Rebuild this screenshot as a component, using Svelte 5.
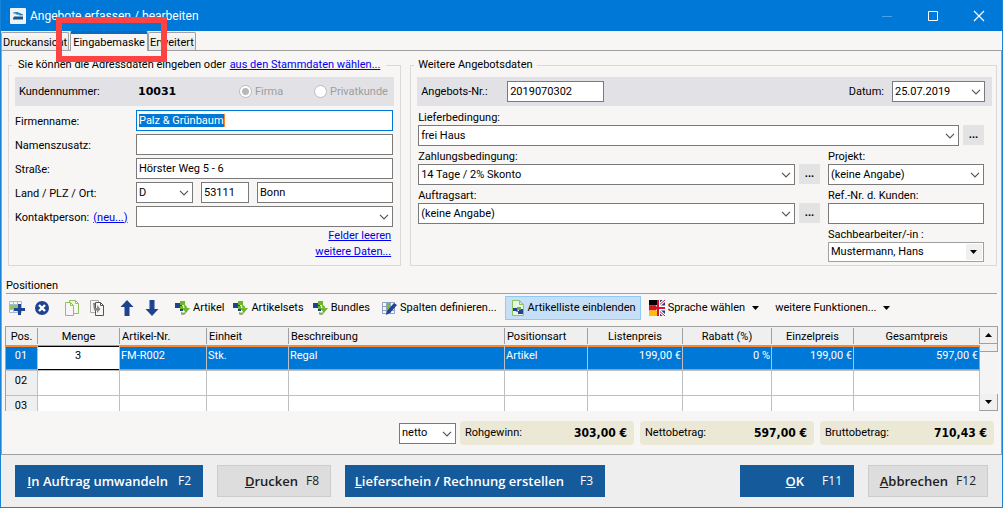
<script>
import { onMount } from 'svelte';

const tabs = ['Druckansicht', 'Eingabemaske', 'Erweitert'];
let activeTab = $state('Eingabemaske');
let kundenart = $state('firma');
let showList = $state(true);
let nameInput;

let firma = $state('Palz & Grünbaum');
let zusatz = $state('');
let strasse = $state('Hörster Weg 5 - 6');
let plz = $state('53111');
let ort = $state('Bonn');

const columns = [
  { title: 'Pos.', cls: 'pos' },
  { title: 'Menge', cls: 'menge' },
  { title: 'Artikel-Nr.', cls: 'nr' },
  { title: 'Einheit', cls: 'einheit' },
  { title: 'Beschreibung', cls: 'beschreibung' },
  { title: 'Positionsart', cls: 'art' },
  { title: 'Listenpreis', cls: 'liste' },
  { title: 'Rabatt (%)', cls: 'rabatt' },
  { title: 'Einzelpreis', cls: 'einzel' },
  { title: 'Gesamtpreis', cls: 'gesamt' }
];

const rows = [
  ['01', '3', 'FM-R002', 'Stk.', 'Regal', 'Artikel', '199,00 €', '0 %', '199,00 €', '597,00 €'],
  ['02', '', '', '', '', '', '', '', '', ''],
  ['03', '', '', '', '', '', '', '', '', '']
];

const sums = [
  { label: 'Rohgewinn:', value: '303,00 €' },
  { label: 'Nettobetrag:', value: '597,00 €' },
  { label: 'Bruttobetrag:', value: '710,43 €' }
];

onMount(() => {
  nameInput.focus();
  nameInput.select();
});
</script>

{#snippet combo(id, value, cls)}
  <span class="combo {cls}">
    <select {id} aria-label={id}>
      <option>{value}</option>
    </select>
    {#if cls === 'old'}
      <svg class="old-arrow" width="16" height="16" viewBox="0 0 16 16">
        <rect width="16" height="16" fill="#f0f0f0" />
        <path d="M4 6h7l-3.5 4z" fill="#000" />
      </svg>
    {:else}
      <svg class="chevron" width="10" height="6" viewBox="0 0 10 6" fill="none" stroke="#555" stroke-width="1.2">
        <path d="M1 .8l4 4 4-4" />
      </svg>
    {/if}
  </span>
{/snippet}

{#snippet insertIcon()}
  <svg width="16" height="16" viewBox="0 0 16 16">
    <path d="M1 3h7v5H1z" fill="#1f4391" />
    <path d="M6 1h5v4H6z" fill="#6cb52d" />
    <path d="M6 6h3v3H6z" fill="#6cb52d" />
    <path d="M6 9h3v2H6z" fill="#1f4391" />
    <path d="M10 5c2 0 3 1 3 3h3l-4 5-4-5h2.500c0-1 0-1-1-1.500z" fill="#6cb52d" />
    <path d="M7 12c2 1 3 1 4 0l1 1c-1 2-3 2.500-5 1.500z" fill="#8ea46d" />
  </svg>
{/snippet}

<div class="window">
  <header class="titlebar">
    <svg width="16" height="16" viewBox="0 0 16 16">
      <rect width="16" height="16" rx="1" fill="#eef3f7" />
      <path d="M3 4.500l4-.5 6 2.500v1L7 6.500z" fill="#1d6fae" />
      <path d="M3 10.500L4 8.500h9v3H3z" fill="#1a5485" />
      <path d="M3 5l8 2.500" stroke="#67b7e8" />
    </svg>
    <h1>Angebote erfassen / bearbeiten</h1>
    <button class="win" aria-label="Minimieren">
      <svg width="12" height="12" viewBox="0 0 12 12" stroke="#4ba0e4"><path d="M1 6.500h10" /></svg>
    </button>
    <button class="win" aria-label="Maximieren">
      <svg width="12" height="12" viewBox="0 0 12 12" fill="none" stroke="#fff"><path d="M1.500 1.500h9v9h-9z" /></svg>
    </button>
    <button class="win" aria-label="Schließen">
      <svg width="12" height="12" viewBox="0 0 12 12" stroke="#fff" stroke-width="1.200"><path d="M1 1l10 10M11 1L1 11" /></svg>
    </button>
  </header>

  <div class="tabs" role="tablist">
    {#each tabs as tab}
      <button
        class="tab"
        class:active={activeTab === tab}
        role="tab"
        aria-selected={activeTab === tab}
        onclick={() => (activeTab = tab)}>{tab}</button>
    {/each}
    <span class="marker"></span>
  </div>

  <main class="pane">
    <div class="groups">
      <fieldset class="address">
        <legend>Sie können die Adressdaten eingeben oder <a href="#stammdaten">aus den Stammdaten wählen...</a></legend>
        <div class="band">
          <span class="band-label">Kundennummer:</span>
          <strong>10031</strong>
          <label class="radio"><input type="radio" name="art" value="firma" bind:group={kundenart} disabled />Firma</label>
          <label class="radio"><input type="radio" name="art" value="privat" bind:group={kundenart} disabled />Privatkunde</label>
        </div>
        <div class="form">
          <label for="firma">Firmenname:</label>
          <span class="focus-field">
            <input id="firma" bind:value={firma} bind:this={nameInput} />
            <i class="caret"></i>
          </span>
          <label for="zusatz">Namenszusatz:</label>
          <input id="zusatz" bind:value={zusatz} />
          <label for="strasse">Straße:</label>
          <input id="strasse" bind:value={strasse} />
          <label for="land">Land / PLZ / Ort:</label>
          <div class="place">
            {@render combo('land', 'D', '')}
            <input class="plz" aria-label="PLZ" bind:value={plz} />
            <input aria-label="Ort" bind:value={ort} />
          </div>
          <span class="contact"><label for="kontakt">Kontaktperson:</label><a href="#neu">(neu...)</a></span>
          {@render combo('kontakt', '', '')}
        </div>
        <div class="links">
          <a href="#leeren">Felder leeren</a>
          <a href="#daten">weitere Daten...</a>
        </div>
      </fieldset>

      <fieldset class="offer">
        <legend>Weitere Angebotsdaten</legend>
        <div class="band">
          <label class="band-label" for="angebot">Angebots-Nr.:</label>
          <input id="angebot" class="number" value="2019070302" />
          <label class="date-label" for="datum">Datum:</label>
          {@render combo('datum', '25.07.2019', 'date')}
        </div>
        <div class="details">
          <div class="field wide">
            <label for="liefer">Lieferbedingung:</label>
            <div class="pick">
              {@render combo('liefer', 'frei Haus', '')}
              <button class="more" aria-label="Lieferbedingung bearbeiten">...</button>
            </div>
          </div>
          <div class="field">
            <label for="zahlung">Zahlungsbedingung:</label>
            <div class="pick">
              {@render combo('zahlung', '14 Tage / 2% Skonto', '')}
              <button class="more" aria-label="Zahlungsbedingung bearbeiten">...</button>
            </div>
          </div>
          <div class="field">
            <label for="projekt">Projekt:</label>
            {@render combo('projekt', '(keine Angabe)', '')}
          </div>
          <div class="field">
            <label for="auftrag">Auftragsart:</label>
            <div class="pick">
              {@render combo('auftrag', '(keine Angabe)', '')}
              <button class="more" aria-label="Auftragsart bearbeiten">...</button>
            </div>
          </div>
          <div class="field">
            <label for="ref">Ref.-Nr. d. Kunden:</label>
            <input id="ref" />
          </div>
          <div class="field last">
            <label for="bearbeiter">Sachbearbeiter/-in :</label>
            {@render combo('bearbeiter', 'Mustermann, Hans', 'old')}
          </div>
        </div>
      </fieldset>
    </div>

    <h2>Positionen</h2>
    <div class="toolbar">
      <button class="tool icon" aria-label="Position einfügen">
        <svg width="16" height="16" viewBox="0 0 16 16">
          <path d="M.5 1.500h12v11H.5zM.5 4.500h12M.5 9.500h12M4.500 1v12M8.500 1v12" fill="none" stroke="#a9b8d4" />
          <path d="M1 5h11v4H1z" fill="#8fc466" />
          <path d="M9 4h3v4h4v3h-4v4H9v-4H5V8h4z" fill="#1f4391" />
        </svg>
      </button>
      <button class="tool icon" aria-label="Position löschen">
        <svg width="16" height="16" viewBox="0 0 16 16">
          <circle cx="8" cy="8" r="7" fill="#1f4391" />
          <path d="M5 5l6 6M11 5l-6 6" stroke="#fff" stroke-width="2.400" />
        </svg>
      </button>
      <button class="tool icon copy" aria-label="Kopieren">
        <svg width="16" height="16" viewBox="0 0 16 16" fill="#f7f6f4" stroke="#8cc45c">
          <path d="M5.500.500h6l3 3v10h-9zM11.500.500v3h3" />
          <path d="M1.500 2.500h5l3 3v10h-8zM6.500 2.500v3h3" />
        </svg>
      </button>
      <button class="tool icon" aria-label="Einfügen">
        <svg width="16" height="16" viewBox="0 0 16 16" fill="#f7f6f4">
          <path d="M1.500.5h8v12h-8z" stroke="#aaa" />
          <path d="M6.500 2.500h5l3 3v10h-8zM11.500 2.500v3h3" stroke="#555" />
          <path d="M4 3h2v5h2V5l3.500 4L8 13v-2.500H5z" fill="#888" />
        </svg>
      </button>
      <button class="tool icon up" aria-label="Nach oben">
        <svg width="16" height="16" viewBox="0 0 16 16" fill="#1f4391"><path d="M8 0l6.500 7h-4v9h-5V7h-4z" /></svg>
      </button>
      <button class="tool icon" aria-label="Nach unten">
        <svg width="16" height="16" viewBox="0 0 16 16" fill="#1f4391"><path d="M8 16l6.500-7h-4V0h-5v9h-4z" /></svg>
      </button>
      <button class="tool articles">{@render insertIcon()}Artikel</button>
      <button class="tool">{@render insertIcon()}Artikelsets</button>
      <button class="tool">{@render insertIcon()}Bundles</button>
      <button class="tool columns">
        <svg width="16" height="16" viewBox="0 0 16 16">
          <path d="M1.500 2.500h12v11h-12zM1 6.500h12M1 10.500h12M5.500 2v12M9.500 2v12" fill="none" stroke="#8fa3c8" />
          <path d="M6 3h3v10H6z" fill="#79b84a" />
          <path d="M13 3l3 2-7 8-4 2 1-4z" fill="#1f4391" />
        </svg>Spalten definieren...
      </button>
      <button class="tool toggle" class:on={showList} aria-pressed={showList} onclick={() => (showList = !showList)}>
        <svg width="14" height="16" viewBox="0 0 14 16">
          <path d="M1.500.5h7l4 4v11h-11zM8.500.5v4h4" fill="#eaf4e2" stroke="#8cc45c" />
          <path d="M2 8h5v3H2zM8 9h4v5H8zM7 11h2v3H7z" fill="#1f4391" />
          <path d="M6 7h4v3H7v2H5v-1h1z" fill="#6cb52d" />
        </svg>Artikelliste einblenden
      </button>
      <button class="tool lang">
        <svg width="16" height="16" viewBox="0 0 16 16">
          <path d="M0 0h8v5.500H0z" fill="#000" />
          <path d="M0 5.500h8v5H0z" fill="#d6141c" />
          <path d="M0 10.500h8V16H0z" fill="#ffbe0a" />
          <path d="M8 0h8v16H8z" fill="#243a86" />
          <path d="M8 7l8-7M8 9l8 7" stroke="#fff" stroke-width="3" />
          <path d="M8 7l8-7M8 9l8 7" stroke="#cf142b" />
          <path d="M8 5.500h8v5H8zM8 0h3v16H8z" fill="#fff" />
          <path d="M8 7h8v2H8zM8 0h2v16H8z" fill="#cf142b" />
        </svg>Sprache wählen
        <svg class="drop" width="7" height="4" viewBox="0 0 7 4"><path d="M0 0h7L3.500 4z" /></svg>
      </button>
      <button class="tool extra">weitere Funktionen...
        <svg class="drop" width="7" height="4" viewBox="0 0 7 4"><path d="M0 0h7L3.500 4z" /></svg>
      </button>
    </div>

    <div class="grid">
      <div class="grid-body">
        <table>
          <thead>
            <tr>
              {#each columns as col}
                <th class={col.cls}><span>{col.title}</span></th>
              {/each}
            </tr>
          </thead>
          <tbody>
            {#each rows as row, i}
              <tr class:selected={i === 0}>
                {#each row as cell, c}
                  <td class={columns[c].cls}>{cell}</td>
                {/each}
              </tr>
            {/each}
          </tbody>
        </table>
      </div>
      <div class="scroll">
        <button aria-label="Hoch"><svg width="7" height="4" viewBox="0 0 7 4"><path d="M0 4h7L3.500 0z" /></svg></button>
        <span class="thumb"></span>
        <button class="down" aria-label="Runter"><svg width="7" height="4" viewBox="0 0 7 4"><path d="M0 0h7L3.500 4z" /></svg></button>
      </div>
    </div>

    <div class="sums">
      {@render combo('preisart', 'netto', '')}
      {#each sums as sum}
        <div class="sum"><span>{sum.label}</span><b>{sum.value}</b></div>
      {/each}
    </div>
  </main>

  <footer>
    <button class="action primary convert"><span><u>I</u>n Auftrag umwandeln</span><kbd>F2</kbd></button>
    <button class="action print"><span><u>D</u>rucken</span><kbd>F8</kbd></button>
    <button class="action primary deliver"><span><u>L</u>ieferschein / Rechnung erstellen</span><kbd>F3</kbd></button>
    <button class="action primary ok"><span><u>O</u>K</span><kbd>F11</kbd></button>
    <button class="action cancel"><span><u>A</u>bbrechen</span><kbd>F12</kbd></button>
  </footer>
</div>

<style>
:global(body) {
  margin: 0;
  background: #f7f6f4;
}
.window {
  box-sizing: border-box;
  border: 1px solid #1883d7;
  border-top: none;
  background: #f7f6f4;
  color: #000;
  font: 11px/14px Roboto, "DejaVu Sans Condensed", sans-serif;
}
.window :global(*) {
  box-sizing: border-box;
}
button, input, select {
  margin: 0;
  font: inherit;
  color: inherit;
  border-radius: 0;
}
button {
  padding: 0;
  border: none;
  background: none;
  white-space: nowrap;
}
svg {
  display: block;
  flex: none;
}
a {
  color: #0000ee;
}

.titlebar {
  display: flex;
  align-items: center;
  height: 31px;
  padding-left: 9px;
  background: #0078d7;
  color: #fff;
}
h1 {
  flex: 1;
  margin: 0 0 0 4px;
  font: 12px/16px Roboto, sans-serif;
}
.win {
  display: flex;
  align-items: center;
  justify-content: center;
  width: 46px;
  height: 31px;
}

.tabs {
  position: relative;
  display: flex;
  align-items: flex-end;
  height: 19px;
}
.tab {
  height: 18px;
  padding: 3px 1px 0;
  border: 1px solid #a0a0a0;
  border-bottom: none;
  border-radius: 2px 2px 0 0;
  background: linear-gradient(#f7f6f4, #e8e8e8);
}
.tab.active {
  height: 20px;
  margin: 0 0 -1px 1px;
  padding: 1px 2px 0;
  border-top: 3px solid #0a6cc0;
  background: #f7f6f4;
  z-index: 1;
}
.marker {
  position: absolute;
  z-index: 2;
  left: 55px;
  top: -14px;
  width: 111px;
  height: 45px;
  border: 6px solid #ff4343;
  pointer-events: none;
}

.pane {
  padding: 7px 3px 9px;
  border: 1px solid #a0a0a0;
}
.groups {
  display: grid;
  grid-template-columns: 67fr 100fr;
  gap: 9px;
  padding: 0 1px 0 3px;
}
fieldset {
  margin: 0;
  padding: 5px 6px 3px;
  border: 1px solid #d9d9d9;
  min-width: 0;
}
.offer {
  padding-right: 4px;
}
legend {
  margin-left: -3px;
  padding: 0 6px;
  white-space: nowrap;
}
.offer legend {
  padding: 0 4px;
}
legend a {
  margin-left: 1px;
}
.band {
  display: flex;
  align-items: center;
  height: 29px;
  margin-bottom: 4px;
  background: #e2e2e6;
}
.band-label {
  margin-left: 4px;
}
.address .band-label {
  width: 119px;
}
strong {
  width: 101px;
  font-family: "DejaVu Sans", sans-serif;
}
.radio {
  display: flex;
  align-items: center;
  width: 75px;
  color: #9d9d9d;
  white-space: nowrap;
}
.radio input {
  appearance: none;
  flex: none;
  width: 13px;
  height: 13px;
  margin-right: 3px;
  padding: 0;
  border: 1px solid #bcbcbc;
  border-radius: 50%;
  background: #fff;
}
.radio input:checked {
  background: radial-gradient(circle, #b8b8b8 3px, #fff 4px);
}

input, select {
  width: 100%;
  height: 21px;
  padding: 1px 2px;
  border: 1px solid #7a7a7a;
  background: #fff;
  outline: none;
}
select {
  appearance: none;
  padding-right: 16px;
}
.combo {
  position: relative;
  display: block;
  flex: 1;
}
.chevron {
  position: absolute;
  right: 4px;
  top: 8px;
  pointer-events: none;
}
.old select {
  height: 20px;
  border-color: #a0a0a0;
}
.old-arrow {
  position: absolute;
  right: 2px;
  top: 2px;
  pointer-events: none;
}
.form {
  display: grid;
  grid-template-columns: 121px 1fr;
  grid-auto-rows: 21px;
  row-gap: 3px;
  align-items: center;
  margin-right: 1px;
  white-space: nowrap;
}
.form > label, .contact {
  padding-top: 2px;
}
.focus-field {
  position: relative;
}
#firma {
  display: block;
}
#firma:focus {
  border-color: #0078d7;
}
#firma::selection {
  background: #0078d7;
  color: #fff;
}
.caret {
  position: absolute;
  left: 88px;
  top: 4px;
  width: 1px;
  height: 13px;
  background: #ff8728;
}
.place {
  display: flex;
  gap: 8px;
}
.place .combo {
  flex: none;
  width: 57px;
}
.place .plz {
  flex: none;
  width: 48px;
}
.contact {
  display: flex;
  gap: 4px;
}
.links {
  display: flex;
  flex-direction: column;
  align-items: flex-end;
  padding: 1px 3px 0 0;
  line-height: 16px;
}

.number {
  width: 97px;
  margin-left: 16px;
}
.date-label {
  margin: 0 8px 0 auto;
}
.date {
  flex: none;
  width: 93px;
  margin-right: 7px;
}
.offer .band-label {
  width: 70px;
}
.details {
  display: grid;
  grid-template-columns: 1fr 156px;
  gap: 3px 8px;
  margin: 0 8px 0 1px;
}
.field {
  display: flex;
  flex-direction: column;
}
.field label {
  padding-top: 1px;
}
.field .combo {
  flex: auto;
}
.wide {
  grid-column: 1 / 3;
}
.last {
  grid-column: 2;
}
.pick {
  display: flex;
  gap: 4px;
}
.more {
  width: 21px;
  height: 20px;
  background: #e3e3e3;
  font-weight: bold;
}

h2 {
  margin: 12px 1px 0;
  border-bottom: 1px solid #a0a0a0;
  padding-top: 1px;
  font: inherit;
}
.toolbar {
  display: flex;
  align-items: center;
  height: 32px;
  padding: 2px 0 6px 4px;
}
.tool {
  display: flex;
  align-items: center;
  gap: 3px;
  height: 24px;
  margin-right: 8px;
  line-height: 16px;
}
.tool.icon {
  margin-right: 9px;
}
.tool.copy, .tool.up {
  margin-left: 5px;
}
.tool.articles {
  margin-left: 5px;
}
.tool.columns {
  margin-left: 3px;
}
.toggle {
  padding: 0 4px 0 5px;
  border: 1px solid transparent;
}
.toggle.on {
  border-color: #90c8f6;
  background: #c5dff6;
}
.drop {
  margin-left: 4px;
}
.lang {
  margin-right: 16px;
}

.grid {
  display: flex;
  height: 85px;
  border-top: 1px solid #a0a0a0;
  border-left: 1px solid #a0a0a0;
}
.grid-body {
  flex: 1;
  overflow: hidden;
  background: #fff;
}
table {
  width: 100%;
  table-layout: fixed;
  border-collapse: separate;
  border-spacing: 0;
}
th {
  height: 19px;
  padding: 0;
  border-bottom: 1px solid #a0a0a0;
  background: #efefef;
  font-weight: normal;
  text-align: left;
}
th span {
  display: block;
  padding: 2px 2px 0;
  border-right: 1px solid #a0a0a0;
}
td {
  height: 25px;
  padding: 3px 2px 0 1px;
  border-right: 1px solid #c0c0c0;
  border-bottom: 1px solid #c0c0c0;
  vertical-align: top;
}
.pos { width: 32px; text-align: center; }
.menge { width: 82px; text-align: center; }
.nr { width: 87px; }
.einheit { width: 82px; }
.art { width: 83px; }
.liste { width: 95px; }
.rabatt { width: 89px; }
.einzel { width: 82px; }
.gesamt { width: 126px; }
th.liste, th.rabatt, th.einzel, th.gesamt {
  text-align: center;
}
td.liste, td.rabatt, td.einzel, td.gesamt {
  text-align: right;
  padding-right: 1px;
}
td.pos {
  background: #efefef;
}
.selected td {
  background: #0078d7;
  color: #fff;
  box-shadow: inset 0 1px #ff8728, inset 0 -1px #ff8728;
}
.selected td.menge {
  background: #fff;
  color: #000;
  box-shadow: inset 0 1px #000, inset 0 -1px #000;
}
.selected td.gesamt {
  border-right-color: #ff8728;
}
.scroll {
  display: flex;
  flex-direction: column;
  width: 18px;
  background: #f4f4f4;
}
.scroll button {
  display: flex;
  align-items: center;
  justify-content: center;
  height: 17px;
  border: 1px solid #a0a0a0;
  border-width: 0 1px 1px 0;
  background: #f0f0f0;
}
.thumb {
  height: 8px;
  border: 1px solid #a0a0a0;
  border-width: 0 1px 1px 0;
  background: #f0f0f0;
}
.scroll .down {
  margin-top: auto;
}

.sums {
  display: flex;
  justify-content: flex-end;
  align-items: center;
  gap: 6px;
  margin: 10px 4px 0 0;
}
.sums .combo {
  flex: none;
  width: 57px;
  margin-right: -2px;
}
.sum {
  display: flex;
  align-items: center;
  justify-content: space-between;
  width: 174px;
  height: 24px;
  padding: 0 7px 0 5px;
  border-radius: 4px;
  background: #ebe8d6;
}
.sum b {
  font: bold 12px/14px "DejaVu Sans Condensed", sans-serif;
}

footer {
  display: flex;
  gap: 14px;
  padding: 10px 14px;
  background: #eeeeee;
}
.action {
  display: flex;
  align-items: center;
  justify-content: flex-end;
  height: 32px;
  padding-right: 11px;
  border: 1px solid #cccccc;
  background: #dddddd;
  color: #1e1e1e;
  font: 600 13px/18px "Open Sans", sans-serif;
}
.primary {
  border-color: #155a9a;
  background: #155a9a;
  color: #fff;
}
kbd {
  margin-left: 10px;
  font: 12px/18px "Open Sans", sans-serif;
}
.print kbd, .cancel kbd {
  margin-left: 8px;
}
.convert {
  width: 188px;
}
.print {
  width: 114px;
}
.action.deliver {
  width: 260px;
}
.deliver kbd {
  margin-left: 16px;
}
.ok {
  width: 114px;
  margin-left: auto;
}
.ok kbd {
  margin-left: 18px;
}
.cancel {
  width: 120px;
}
</style>
